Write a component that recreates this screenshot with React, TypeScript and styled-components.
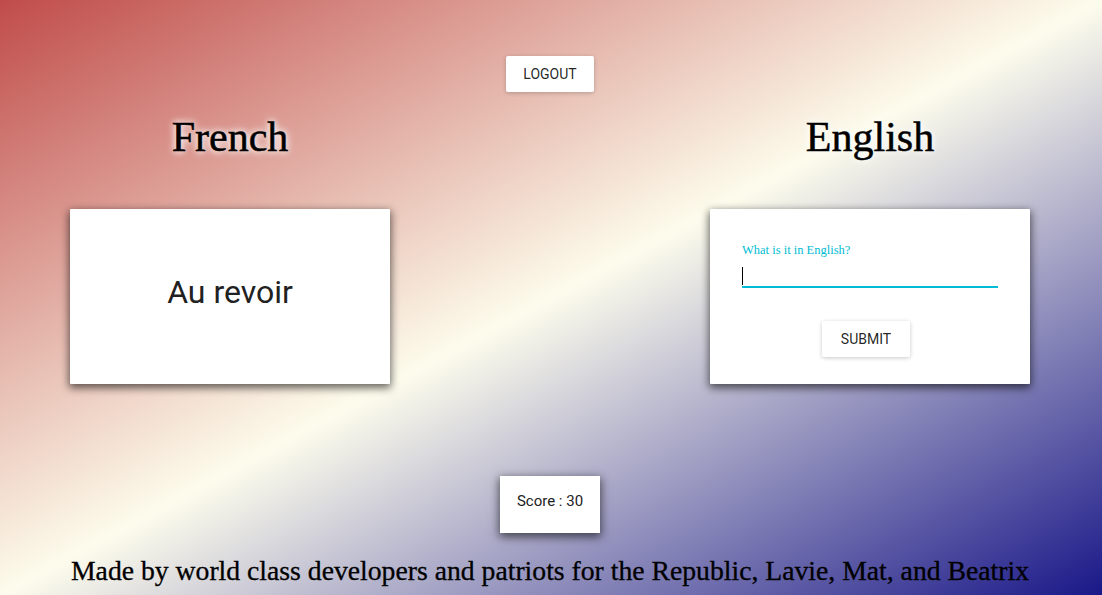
import React from "react";
import styled, { createGlobalStyle } from "styled-components";

const Global = createGlobalStyle`
  html, body { margin: 0; padding: 0; }
  body { font-family: Roboto, "Liberation Sans", sans-serif; }
  * { box-sizing: border-box; }
`;

const Page = styled.div`
  min-height: 100vh;
  display: flex;
  flex-direction: column;
  align-items: center;
  padding: 56px 2px 0 0;
  background: linear-gradient(to bottom right, #c04c4a 0%, #fdfcec 50%, #1a1888 100%);
`;

const Button = styled.button`
  height: 36px;
  min-width: 88px;
  padding: 0 16px;
  border: none;
  border-radius: 2px;
  background: #ffffff;
  color: rgba(0, 0, 0, 0.87);
  font-family: Roboto, "Liberation Sans", sans-serif;
  font-size: 14px;
  font-weight: 400;
  letter-spacing: 0;
  text-transform: uppercase;
  box-shadow: 0 1px 4px rgba(0, 0, 0, 0.22);
  cursor: pointer;
`;

const Columns = styled.div`
  width: 100%;
  display: flex;
  justify-content: space-between;
  padding: 17px 70px 0 70px;
`;

const Column = styled.div`
  width: 320px;
  display: flex;
  flex-direction: column;
  align-items: center;
`;

const Heading = styled.h1`
  margin: 0 0 44px;
  height: 56px;
  line-height: 56px;
  font-family: "Liberation Serif", "DejaVu Serif", serif;
  font-weight: 400;
  font-size: 42px;
  color: #000;
  -webkit-text-stroke: 0.5px #000;
  text-shadow: 0 0 6px #fff, 0 0 10px #fff;
`;

const Card = styled.div`
  width: 320px;
  height: 175px;
  background: #fff;
  box-shadow: 0 3px 9px 1px rgba(0, 0, 0, 0.6);
  border-radius: 1px;
`;

const WordCard = styled(Card)`
  display: flex;
  align-items: center;
  justify-content: center;
  padding-bottom: 10px;
  font-family: Roboto, "Liberation Sans", sans-serif;
  font-size: 32px;
  color: #212121;
`;

const FormCard = styled(Card)`
  display: flex;
  flex-direction: column;
  padding: 33px 32px 0;
`;

const Label = styled.label`
  font-family: "Liberation Serif", "DejaVu Serif", serif;
  font-size: 12.5px;
  color: #00bcd4;
  line-height: 16px;
`;

const InputWrap = styled.div`
  position: relative;
  margin-top: 1px;
`;

const Input = styled.input`
  display: block;
  width: 100%;
  height: 29px;
  border: none;
  border-bottom: 2px solid #00bcd4;
  outline: none;
  padding: 0;
  font-family: Roboto, "Liberation Sans", sans-serif;
  font-size: 16px;
  caret-color: #000;
  background: transparent;
`;

const Caret = styled.span`
  position: absolute;
  left: 0;
  bottom: 3px;
  width: 1px;
  height: 18px;
  background: #000;
`;

const SubmitRow = styled.div`
  display: flex;
  justify-content: center;
  margin-top: 33px;
  padding-right: 8px;
`;

const ScoreBox = styled.div`
  margin-top: 92px;
  width: 100px;
  height: 57px;
  display: flex;
  align-items: center;
  justify-content: center;
  padding-bottom: 7px;
  background: #fff;
  box-shadow: 0 3px 9px 1px rgba(0, 0, 0, 0.6);
  font-family: Roboto, "Liberation Sans", sans-serif;
  font-size: 15px;
  color: #212121;
`;

const Footer = styled.p`
  margin: 23px 0 0;
  line-height: 30px;
  font-family: "Liberation Serif", "DejaVu Serif", serif;
  font-size: 27.7px;
  color: #000;
  -webkit-text-stroke: 0.3px #000;
`;

export default function App() {
  return (
    <>
      <Global />
      <Page>
        <Button>Logout</Button>
        <Columns>
          <Column>
            <Heading>French</Heading>
            <WordCard>Au revoir</WordCard>
          </Column>
          <Column>
            <Heading>English</Heading>
            <FormCard>
              <Label htmlFor="answer">What is it in English?</Label>
              <InputWrap>
                <Input id="answer" />
                <Caret />
              </InputWrap>
              <SubmitRow>
                <Button>Submit</Button>
              </SubmitRow>
            </FormCard>
          </Column>
        </Columns>
        <ScoreBox>Score : 30</ScoreBox>
        <Footer>Made by world class developers and patriots for the Republic, Lavie, Mat, and Beatrix</Footer>
      </Page>
    </>
  );
}
